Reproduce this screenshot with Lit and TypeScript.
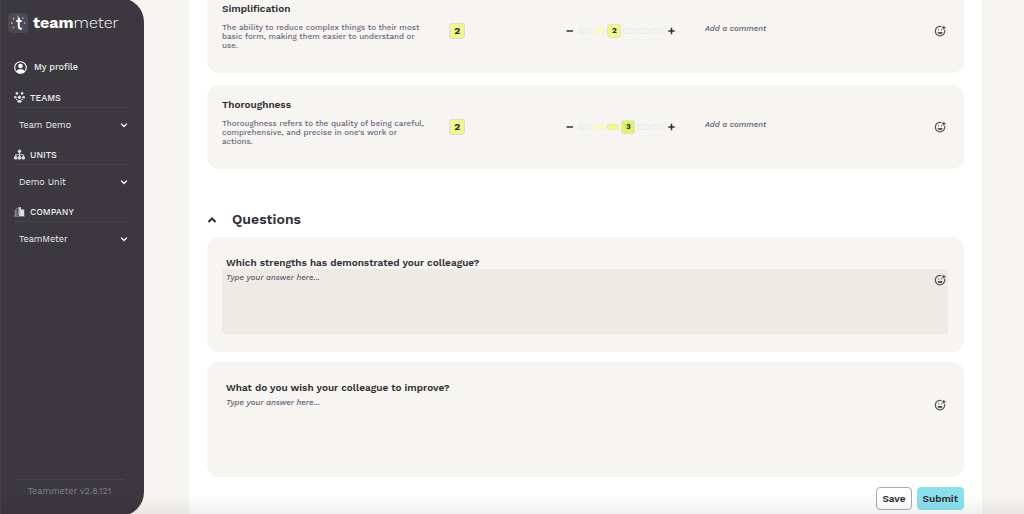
import { LitElement, html, css, svg } from "lit";
import { customElement, property, state } from "lit/decorators.js";
import { classMap } from "lit/directives/class-map.js";

const chevron = svg`<path d="M2.5 4 5 6.5 7.5 4" fill="none" stroke="currentColor" stroke-width="1.4" stroke-linecap="round" stroke-linejoin="round"/>`;

const icons: Record<string, unknown> = {
  TEAMS: html`<svg class="nav-icon" viewBox="0 0 11 11" fill="#dedde0" aria-hidden="true">
    <circle cx="2.9" cy="1.4" r="1.3"/><circle cx="8.1" cy="1.4" r="1.3"/>
    <circle cx="1.3" cy="5.3" r="1.3"/><circle cx="9.7" cy="5.3" r="1.3"/>
    <circle cx="5.5" cy="5.2" r="1.7"/><circle cx="2.8" cy="7.5" r=".8"/><circle cx="8.2" cy="7.5" r=".8"/>
    <ellipse cx="5.5" cy="9.4" rx="2.3" ry="1.4"/></svg>`,
  UNITS: html`<svg class="nav-icon" viewBox="0 0 11 11" fill="#dedde0" aria-hidden="true">
    <circle cx="5.5" cy="2.2" r="1.7"/><rect x="0" y="7.2" width="3.3" height="3.3" rx="1"/><rect x="3.85" y="7.2" width="3.3" height="3.3" rx="1"/><rect x="7.7" y="7.2" width="3.3" height="3.3" rx="1"/>
    <path d="M5.5 3v5M1.6 8V5.7h7.8V8" fill="none" stroke="#dedde0" stroke-width=".9"/></svg>`,
  COMPANY: html`<svg class="nav-icon" viewBox="0 0 11 11" fill="#dedde0" aria-hidden="true">
    <path d="M1.3 10V4L4.7 1.3V9M2.9 4.4v5M0 10.1h11" fill="none" stroke="#a3a2a8" stroke-width=".9"/>
    <path d="M5.2 10V1.4L7 .8v2.7h3.2V10z"/></svg>`,
};

const smiley = html`<svg class="smiley" viewBox="0 0 12 12" fill="none" stroke="#55535c" aria-hidden="true">
  <path d="M7.6 1.7A4.7 4.7 0 1 0 10.6 5" stroke-width="1.2"/>
  <path d="M3.6 7.1a2.5 2.2 0 0 0 5 0z" fill="#55535c" stroke="none"/>
  <path d="M4.6 4.3v1.2M7.5 4.3v1.2" stroke-width="1"/>
  <path d="M9.8 1v3.6M8 2.8h3.6" stroke-width="1.3"/></svg>`;

const base = css`
  * { box-sizing: border-box; }
  button, textarea { font: inherit; color: inherit; background: none; border: 0; padding: 0; margin: 0; }
  button { cursor: pointer; }
  textarea { display: block; resize: none; outline: none; overflow: hidden; }
  textarea::placeholder { color: #5f5c70; opacity: 1; font-style: italic; }
  .smiley { display: block; width: 12px; height: 12px; }
`;

@customElement("side-bar")
class SideBar extends LitElement {
  static styles = [base, css`
    :host {
      display: flex; flex-direction: column; width: 144px; flex: none; margin: -2px 0;
      padding: 15px 15px 19px 14px; background: #3b393f; color: #eeedf0;
      box-shadow: inset 1px 0 #454349; border-radius: 0 24px 24px 0;
    }
    .brand { display: flex; align-items: center; gap: 4px; margin-left: -6px; height: 20px; color: #fff; text-decoration: none; font-size: 16px; line-height: 20px; font-weight: 300; }
    .brand b { font-weight: 700; }
    .mark { width: 21px; height: 20px; flex: none; }
    .profile { display: flex; align-items: center; gap: 7px; height: 14px; margin-top: 27px; color: inherit; text-decoration: none; font-size: 9px; font-weight: 500; }
    .profile svg { width: 13px; height: 13px; }
    .groups { margin-top: 17px; }
    .group { height: 57px; }
    h2 { display: flex; align-items: center; gap: 5px; margin: 0; height: 17px; padding-bottom: 3px; border-bottom: 1px solid #454349; font-size: 9px; line-height: 14px; font-weight: 500; }
    .nav-icon { width: 11px; height: 11px; }
    .entry { display: flex; align-items: center; justify-content: space-between; width: 100%; height: 16px; margin-top: 9px; padding-left: 5px; font-size: 9px; font-weight: 400; }
    .entry svg { width: 10px; height: 10px; }
    .version { margin-top: auto; margin-right: 4px; padding: 5px 0 0; border-top: 1px solid #454349; color: #817e90; font-size: 9px; line-height: 12px; text-align: center; }
  `];
  private groups = [["TEAMS", "Team Demo"], ["UNITS", "Demo Unit"], ["COMPANY", "TeamMeter"]];
  render() {
    return html`
      <a class="brand" href="#">
        <svg class="mark" viewBox="0 0 21 20" aria-hidden="true">
          <rect width="20" height="20" rx="4" fill="#4c4957"/>
          <path d="M10.8 4.5v9.2c0 1.7 1.2 2.5 3.1 1.6M8.3 8h5.4" fill="none" stroke="#fff" stroke-width="2"/>
          <circle cx="5.5" cy="5.6" r=".9" fill="#c8e66a"/><circle cx="10" cy="3.2" r=".8" fill="#6bd8d5"/>
          <circle cx="14.8" cy="5.2" r=".9" fill="#58bfe5"/><circle cx="3.8" cy="10" r=".9" fill="#e6b14f"/>
          <circle cx="16.6" cy="10" r=".9" fill="#d47be0"/><circle cx="5.5" cy="14.6" r=".9" fill="#e9975f"/>
        </svg>
        <span><b>team</b>meter</span>
      </a>
      <a class="profile" href="#">
        <svg viewBox="0 0 13 13" aria-hidden="true"><circle cx="6.5" cy="6.5" r="5.8" fill="none" stroke="#fff" stroke-width="1.1"/><circle cx="6.5" cy="5" r="2.3" fill="#fff"/><path d="M2.4 10.3C3.3 7.7 9.7 7.7 10.6 10.3 8.8 12.8 4.2 12.8 2.4 10.3z" fill="#fff"/></svg>
        My profile
      </a>
      <nav class="groups">
        ${this.groups.map(([title, entry]) => html`
          <div class="group">
            <h2>${icons[title]}${title}</h2>
            <button class="entry">${entry}<svg viewBox="0 0 10 10" aria-hidden="true">${chevron}</svg></button>
          </div>`)}
      </nav>
      <div class="version">Teammeter v2.8.121</div>`;
  }
}

@customElement("skill-card")
class SkillCard extends LitElement {
  @property() name = "";
  @property() description = "";
  @property({ type: Number }) score = 0;
  @property({ type: Number }) value = 0;
  static styles = [base, css`
    :host { display: grid; grid-template-columns: 227fr 117fr 138fr 244fr; height: 84px; padding: 13px 15px 0; border-radius: 12px; background: #f7f5f1; }
    h3 { margin: 0; font-size: 10px; line-height: 14px; font-weight: 600; color: #302e35; }
    p { margin: 7px 22px 0 0; font-size: 8px; line-height: 9px; font-weight: 500; color: #6b687c; }
    .score { width: 16px; height: 16px; margin-top: 21px; border: 1px solid #d9dbdc; border-radius: 3px; background: #ecfa8c; font-size: 10px; line-height: 14px; font-weight: 700; text-align: center; color: #2d2c30; }
    .scale { display: flex; align-items: center; gap: 5px; height: 16px; margin-top: 21px; }
    .step { width: 8px; height: 16px; }
    .step svg { display: block; width: 8px; height: 8px; }
    .track { position: relative; display: flex; align-items: center; gap: 2px; }
    .track input { position: absolute; inset: 0; width: 100%; height: 100%; margin: 0; opacity: 0; }
    .cell { width: 12px; height: 6px; border: 1px solid #ebebed; border-radius: 2px; background: #f3f3f4; }
    .low { background: #f5fcc6; border-color: #f1f6cf; }
    .mid { background: #ecf98c; border-color: #e6f094; }
    .current { width: 14px; height: 14px; border-radius: 3px; border-color: #e2e6c4; background: #ecf98c; font-size: 8px; line-height: 12px; font-weight: 700; text-align: center; color: #2d2c30; }
    .high { background: #e0f46a; }
    .comment { display: flex; justify-content: space-between; padding-right: 3px; margin-top: 20px; }
    .comment textarea { flex: 1; min-width: 0; height: 40px; padding-top: 1px; font-size: 8px; line-height: 12px; font-weight: 500; }
    .comment button { height: 12px; margin-top: 3px; }
  `];
  private shift(by: number) { this.value = Math.max(0, Math.min(5, this.value + by)); }
  render() {
    return html`
      <div><h3>${this.name}</h3><p>${this.description}</p></div>
      <div class="score">${this.score}</div>
      <div class="scale">
        <button class="step" aria-label="Decrease" @click=${() => this.shift(-1)}><svg viewBox="0 0 8 8"><path d="M.5 4H7" stroke="#302e35" stroke-width="1.5"/></svg></button>
        <div class="track">
          ${[0, 1, 2, 3, 4, 5].map((n) => html`<span class=${classMap({
            cell: true, low: n === 1 && n < this.value, mid: n > 1 && n < this.value,
            current: n === this.value, high: n === this.value && n > 2,
          })}>${n === this.value ? n : ""}</span>`)}
          <input type="range" min="0" max="5" aria-label="${this.name} rating" .value=${String(this.value)}
            @input=${(e: Event) => { this.value = Number((e.target as HTMLInputElement).value); }} />
        </div>
        <button class="step" aria-label="Increase" @click=${() => this.shift(1)}><svg viewBox="0 0 8 8"><path d="M.3 4h6.4M3.5 .8v6.4" stroke="#302e35" stroke-width="1.5"/></svg></button>
      </div>
      <div class="comment">
        <textarea placeholder="Add a comment" aria-label="Comment on ${this.name}"></textarea>
        <button aria-label="Insert emoji">${smiley}</button>
      </div>`;
  }
}

@customElement("question-card")
class QuestionCard extends LitElement {
  @property() question = "";
  @property({ type: Boolean }) active = false;
  static styles = [base, css`
    :host { display: block; padding: 18px 16px 18px 15px; border-radius: 12px; background: #f7f5f1; }
    label { display: block; padding: 1px 0 0 4px; font-size: 10px; line-height: 13px; font-weight: 600; color: #302e35; }
    .field { display: flex; justify-content: space-between; height: 65px; padding: 3px 2px 2px 4px; border-radius: 3px; }
    .active { background: #eeebe4; }
    textarea { flex: 1; min-width: 0; font-size: 8px; line-height: 12px; font-weight: 500; }
    .field button { height: 12px; margin-top: 2px; }
  `];
  render() {
    return html`
      <label for="answer">${this.question}</label>
      <div class=${classMap({ field: true, active: this.active })}>
        <textarea id="answer" placeholder="Type your answer here..."></textarea>
        <button aria-label="Insert emoji">${smiley}</button>
      </div>`;
  }
}

@customElement("app-root")
class AppRoot extends LitElement {
  @state() private open = true;
  static styles = [base, css`
    :host { position: relative; display: flex; height: 100vh; overflow: hidden; background: #f7f5f1; font-family: "Work Sans", Inter, "Liberation Sans", sans-serif; }
    main { flex: 1; min-width: 0; margin: 0 42px 0 45px; padding: 0 18px; background: #fff; }
    .skills { display: grid; gap: 12px; margin-top: -11px; }
    .section { display: flex; align-items: center; gap: 15px; height: 20px; margin: 40px 0 8px; color: #302e35; }
    .section svg { display: block; width: 10px; height: 10px; }
    .section h2 { margin: 0; font-size: 14px; line-height: 20px; font-weight: 600; }
    .questions { display: grid; gap: 10px; }
    .actions { display: flex; justify-content: flex-end; gap: 5px; margin-top: 10px; font-size: 10px; font-weight: 600; color: #302e35; }
    .actions button { height: 23px; padding: 0 5px; border: 1px solid #aaa9ad; border-radius: 4px; background: #fff; }
    .actions .submit { border-color: #8be0ee; background: #8be0ee; }
    .fade { position: absolute; inset: auto 0 0 0; height: 20px; background: linear-gradient(transparent, rgb(0 0 0 / 6%)); pointer-events: none; }
  `];
  render() {
    return html`
      <side-bar></side-bar>
      <main>
        <div class="skills">
          <skill-card name="Simplification" score="2" value="2"
            description="The ability to reduce complex things to their most basic form, making them easier to understand or use."></skill-card>
          <skill-card name="Thoroughness" score="2" value="3"
            description="Thoroughness refers to the quality of being careful, comprehensive, and precise in one's work or actions."></skill-card>
        </div>
        <div class="section">
          <button aria-label="Toggle questions" aria-expanded=${this.open} @click=${() => { this.open = !this.open; }}>
            <svg viewBox="0 0 10 10"><path d="m1.5 8 3.5-3.5L8.5 8" fill="none" stroke="currentColor" stroke-width="2"/></svg>
          </button>
          <h2>Questions</h2>
        </div>
        ${this.open ? html`<div class="questions">
          <question-card active question="Which strengths has demonstrated your colleague?"></question-card>
          <question-card question="What do you wish your colleague to improve?"></question-card>
        </div>` : ""}
        <div class="actions"><button>Save</button><button class="submit">Submit</button></div>
      </main>
      <div class="fade"></div>`;
  }
}
